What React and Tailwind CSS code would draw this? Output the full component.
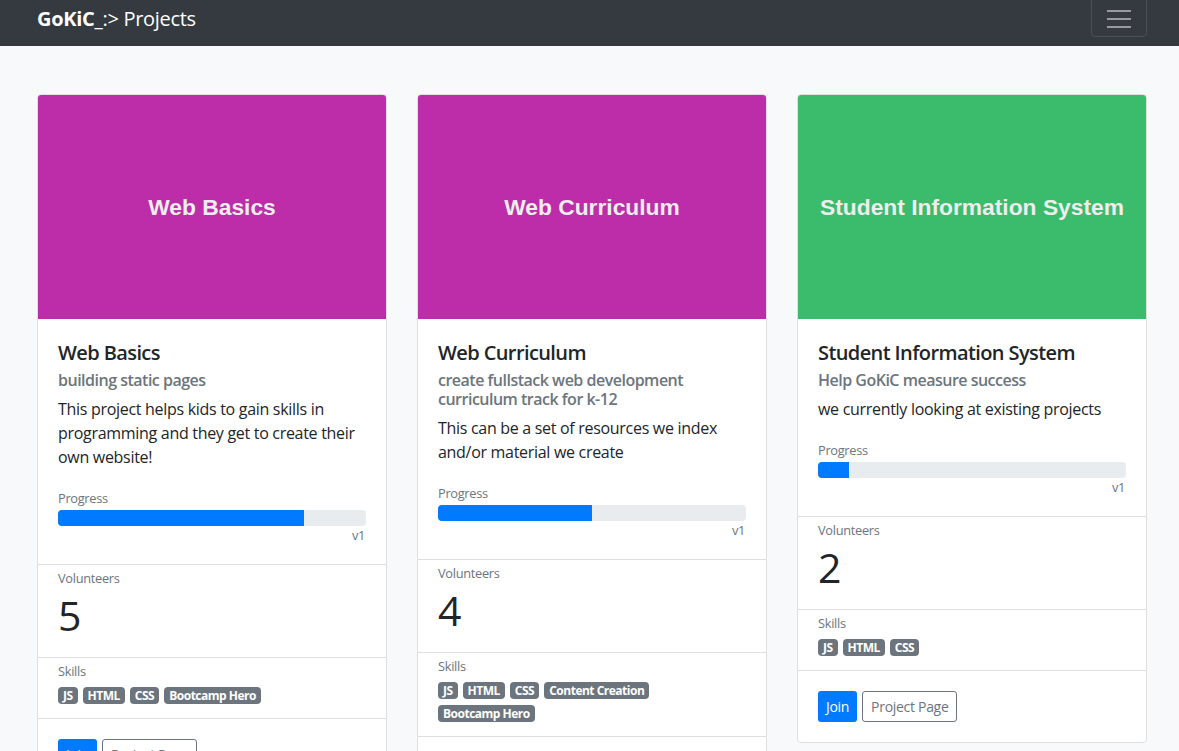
import React from "react";

const projects = [
  {
    name: "Web Basics",
    color: "bg-[#bd2ca9]",
    subtitle: "building static pages",
    text: "This project helps kids to gain skills in programming and they get to create their own website!",
    progress: 80,
    volunteers: 5,
    skills: ["JS", "HTML", "CSS", "Bootcamp Hero"],
  },
  {
    name: "Web Curriculum",
    color: "bg-[#bd2ca9]",
    subtitle: "create fullstack web development curriculum track for k-12",
    text: "This can be a set of resources we index and/or material we create",
    progress: 50,
    volunteers: 4,
    skills: ["JS", "HTML", "CSS", "Content Creation", "Bootcamp Hero"],
  },
  {
    name: "Student Information System",
    color: "bg-[#3bbb6c]",
    subtitle: "Help GoKiC measure success",
    text: "we currently looking at existing projects",
    progress: 10,
    volunteers: 2,
    skills: ["JS", "HTML", "CSS"],
  },
];

const ProjectCard = ({ p }) => {
  return (
    <div className="bg-white border border-[#dfdfdf] rounded-[4px] overflow-hidden">
      {/* image header */}
      <div
        className={`${p.color} h-[224px] flex items-center justify-center text-[#eeeeee] text-[22.8px] tracking-normal font-bold font-['Liberation_Sans',sans-serif]`}
      >
        {p.name}
      </div>
      {/* body */}
      <div className="px-5 pt-[22px] pb-[19px] border-b border-[#dfdfdf]">
        <h5 className="text-[20px] leading-[24px] font-semibold tracking-[-0.6px] text-[#212529]">{p.name}</h5>
        <h6 className="mt-[6px] text-[16px] leading-[19px] font-semibold tracking-[-0.5px] text-[#6c757d]">
          {p.subtitle}
        </h6>
        <p className="mt-[7px] text-[16px] leading-[24px] text-[#212529]">{p.text}</p>
        <div className="mt-[20px]">
          <div className="text-[12.8px] leading-[19px] text-[#6c757d]">Progress</div>
          <div className="mt-[2px] h-4 bg-[#e9ecef] rounded-[4px] overflow-hidden">
            <div className="h-full bg-[#007bff]" style={{ width: `${p.progress}%` }}></div>
          </div>
          <div className="text-right text-[12.8px] leading-[19px] text-[#6c757d] pr-[1px]">v1</div>
        </div>
      </div>
      {/* volunteers */}
      <div className="px-5 pt-[4px] pb-[18px] border-b border-[#dfdfdf]">
        <div className="text-[12.8px] leading-[19px] text-[#6c757d]">Volunteers</div>
        <div className="mt-[3px] text-[41px] leading-[48px] font-medium text-[#212529]">{p.volunteers}</div>
      </div>
      {/* skills */}
      <div className="px-5 pt-[4px] pb-[14px] border-b border-[#dfdfdf]">
        <div className="text-[12.8px] leading-[19px] text-[#6c757d]">Skills</div>
        <div className="mt-[6px] flex flex-wrap gap-x-[5px] gap-y-[6px]">
          {p.skills.map((s) => (
            <span
              key={s}
              className="h-[17px] px-[5px] flex items-center bg-[#6c757d] text-white text-[12px] font-bold tracking-[-0.5px] rounded-[4px]"
            >
              {s}
            </span>
          ))}
        </div>
      </div>
      {/* actions */}
      <div className="px-5 py-5 flex gap-[5px]">
        <button className="h-[31px] px-2 bg-[#007bff] text-white text-[14px] rounded-[3px]">
          Join
        </button>
        <button className="h-[31px] px-2 border border-[#6c757d] text-[#6c757d] text-[14px] rounded-[3px]">
          Project Page
        </button>
      </div>
    </div>
  );
};

export default function App() {
  return (
    <div className="min-h-screen bg-[#f8f9fa] font-['Open_Sans',sans-serif] tracking-[-0.3px]">
      {/* navbar */}
      <div className="h-[46px] bg-[#343a40] flex items-start justify-between pl-[37px] pr-[32px] overflow-hidden">
        <div className="mt-[6px] text-[20px] leading-[26px] text-white">
          <span className="font-bold">GoKiC_</span>:&gt; Projects
        </div>
        <button className="mt-[-3px] w-[56px] h-[40px] border border-[#4b5056] rounded-[4px] flex flex-col items-center justify-center gap-[6px] pt-[3px]">
          <span className="block w-[24px] h-[2px] bg-[#9a999e]"></span>
          <span className="block w-[24px] h-[2px] bg-[#9a999e]"></span>
          <span className="block w-[24px] h-[2px] bg-[#9a999e]"></span>
        </button>
      </div>
      {/* cards */}
      <div className="pt-[48px] pl-[37px]">
        <div className="w-[1110px] grid grid-cols-3 gap-[30px] items-start">
          {projects.map((p) => (
            <ProjectCard key={p.name} p={p} />
          ))}
        </div>
      </div>
    </div>
  );
}
